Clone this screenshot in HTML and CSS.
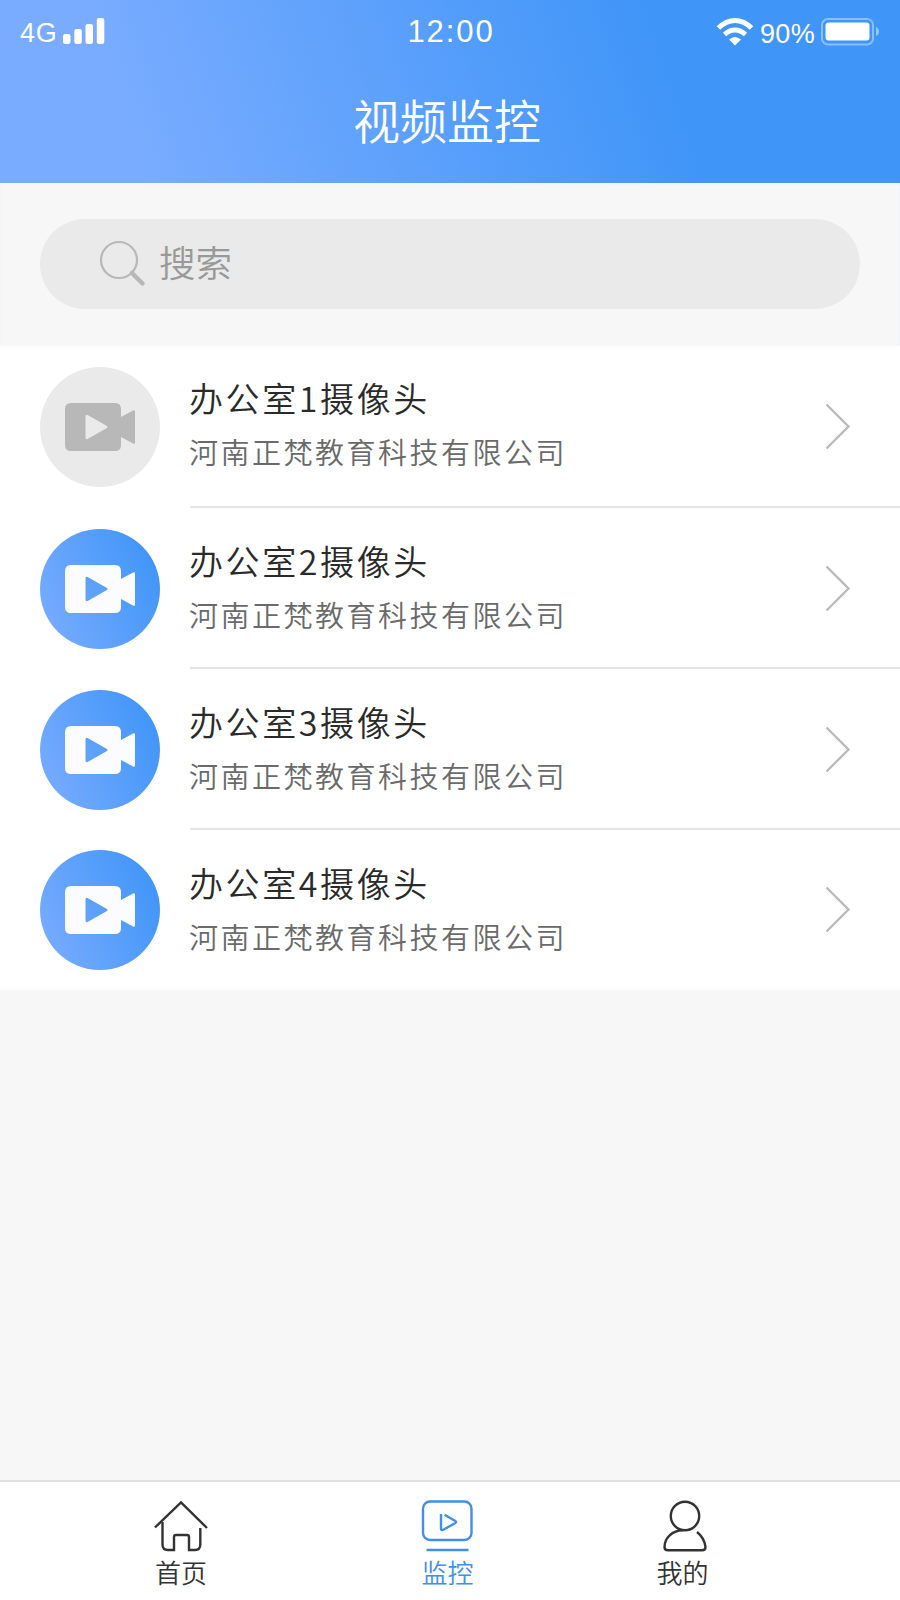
FILE: index.html
```html
<!DOCTYPE html>
<html lang="zh-CN">
<head>
  <meta charset="UTF-8">
  <meta name="viewport" content="width=device-width, initial-scale=1.0">
  <title>视频监控</title>
  <link rel="stylesheet" href="styles.css">
</head>
<body>

  <!-- Shared icons -->
  <svg class="icon-defs" width="0" height="0">
    <symbol id="camera" viewBox="0 0 70 48">
      <path fill-rule="evenodd" d="M6 0H50Q56 0 56 6V14L68 7.500Q70 6.500 70 8.500V39.500Q70 41.500 68 40.500L56 34V42Q56 48 50 48H6Q0 48 0 42V6Q0 0 6 0ZM20.500 13.500V34.500Q20.500 37 22.600 36L41.500 25.200Q43.500 24 41.500 22.800L22.600 12Q20.500 11 20.500 13.500Z"/>
    </symbol>
    <symbol id="arrow" viewBox="0 0 26 48">
      <path d="M1.500 2.500L23.500 24.500L1.500 46.500" fill="none" stroke="#b9b9b9" stroke-width="2.300"/>
    </symbol>
  </svg>

  <div class="app">
    <header class="header">
      <div class="status">
        <div class="status-left">
          <span class="status-text">4G</span>
          <svg width="42" height="26" viewBox="0 0 42 26" fill="#fff">
            <rect x="0" y="16" width="7.500" height="10" rx="2.200"/>
            <rect x="11.300" y="11" width="7.500" height="15" rx="2.200"/>
            <rect x="22.500" y="6" width="7.500" height="20" rx="2.200"/>
            <rect x="33.800" y="0" width="7.500" height="26" rx="2.200"/>
          </svg>
        </div>
        <div class="time">12:00</div>
        <div class="status-right">
          <svg class="wifi" width="38" height="28" viewBox="0 0 38 28">
            <path d="M2.500 10Q10 2.500 19 2.500T35.500 10" fill="none" stroke="#fff" stroke-width="5"/>
            <path d="M8.500 16.500Q13.300 12 19 12T29.500 16.500" fill="none" stroke="#fff" stroke-width="4.800"/>
            <path d="M13 21.500Q19 16.500 25 21.500L19 27.500Z" fill="#fff"/>
          </svg>
          <span class="status-text">90%</span>
          <svg class="battery" width="59" height="28" viewBox="0 0 59 28">
            <rect x="1" y="1" width="51" height="25.500" rx="6" fill="none" stroke="#fff" stroke-opacity=".4" stroke-width="2"/>
            <rect x="4.500" y="4.500" width="44" height="18" rx="3" fill="#fff"/>
            <path d="M55 9Q58 10 58 13.500T55 18Z" fill="#fff" fill-opacity=".45"/>
          </svg>
        </div>
      </div>
      <h1 class="title">视频监控</h1>
    </header>

    <div class="search">
      <div class="search-box">
        <svg width="48" height="48" viewBox="0 0 48 48" fill="none" stroke="#b8b8b8">
          <circle cx="20" cy="20" r="18" stroke-width="2.200"/>
          <path d="M33 33L43.500 43.500" stroke-width="4.500" stroke-linecap="round"/>
        </svg>
        <span>搜索</span>
      </div>
    </div>

    <main class="list">
      <div class="item">
        <div class="avatar offline"><svg width="70" height="48"><use href="#camera"/></svg></div>
        <div class="info">
          <div class="text">
            <div class="name">办公室1摄像头</div>
            <div class="company">河南正梵教育科技有限公司</div>
          </div>
          <svg width="26" height="48"><use href="#arrow"/></svg>
        </div>
      </div>
      <div class="item">
        <div class="avatar"><svg width="70" height="48"><use href="#camera"/></svg></div>
        <div class="info">
          <div class="text">
            <div class="name">办公室2摄像头</div>
            <div class="company">河南正梵教育科技有限公司</div>
          </div>
          <svg width="26" height="48"><use href="#arrow"/></svg>
        </div>
      </div>
      <div class="item">
        <div class="avatar"><svg width="70" height="48"><use href="#camera"/></svg></div>
        <div class="info">
          <div class="text">
            <div class="name">办公室3摄像头</div>
            <div class="company">河南正梵教育科技有限公司</div>
          </div>
          <svg width="26" height="48"><use href="#arrow"/></svg>
        </div>
      </div>
      <div class="item">
        <div class="avatar"><svg width="70" height="48"><use href="#camera"/></svg></div>
        <div class="info">
          <div class="text">
            <div class="name">办公室4摄像头</div>
            <div class="company">河南正梵教育科技有限公司</div>
          </div>
          <svg width="26" height="48"><use href="#arrow"/></svg>
        </div>
      </div>
    </main>

    <nav class="tabbar">
      <div class="tab">
        <svg width="54" height="52" viewBox="0 0 54 52">
          <path d="M1 27.500L27 2.500L53 28"/>
          <path d="M8.500 22V44.500Q8.500 50 14 50H20V37Q20 35 22 35H33Q35 35 35 37V50H41Q46.300 50 46.300 44.500V28"/>
        </svg>
        <span>首页</span>
      </div>
      <div class="tab active">
        <svg width="54" height="52" viewBox="0 0 54 52">
          <rect x="2" y="1.500" width="48.500" height="38.500" rx="7"/>
          <path d="M20 14V28.500Q20 31 22.300 29.700L34 23.200Q36 22 34 20.800L23.500 14.800"/>
          <path d="M5.500 50H47.500"/>
        </svg>
        <span>监控</span>
      </div>
      <div class="tab">
        <svg class="user" width="54" height="52" viewBox="0 0 54 52">
          <circle cx="27" cy="16" r="14.200"/>
          <path d="M25 30.200C14 30.200 6.500 38.500 6.500 47Q6.500 50.300 10 50.300H44Q47.500 50.300 47.500 47Q46.500 38 39 32"/>
        </svg>
        <span>我的</span>
      </div>
    </nav>
  </div>

</body>
</html>
```
FILE: styles.css
```css
:root {
  --blue: #3f95f8;
  --blue-light: #79acff;
  --grey: #b8b8b8;
  --line: #e4e4e4;
}

* {
  box-sizing: border-box;
}

body {
  margin: 0;
  font-family: "Noto Sans CJK SC", sans-serif;
  font-weight: 350;
  background-color: #f7f7f7;
}

svg {
  display: block;
  flex: none;
}

.icon-defs {
  position: absolute; /* keep it out of the page flow */
}

.app {
  width: 900px;
  height: 1600px;
  display: flex;
  flex-direction: column;
}

/* Header */
.header {
  height: 183px;
  color: #fff;
  background: linear-gradient(71deg, var(--blue-light) 15%, var(--blue) 74%);
}

.status {
  height: 64px;
  padding: 0 20px;
  display: grid;
  grid-template-columns: 1fr auto 1fr;
  align-items: center;
  font-family: "Liberation Sans", Arial, sans-serif;
}

.status-left,
.status-right {
  display: flex;
  align-items: center;
}

.status-left {
  gap: 5px;
  padding-bottom: 2px;
}

.status-left .status-text {
  letter-spacing: 0.8px;
}

.status-right {
  justify-content: flex-end;
}

.status-text {
  font-size: 27px;
  line-height: 30px;
  padding-top: 4px;
}

.status-right .status-text {
  margin: 0 6px;
  letter-spacing: 0.3px;
}

.time {
  padding-left: 2px;
  font-size: 31px;
  letter-spacing: 1.9px;
}

.title {
  margin: 0;
  padding-right: 6px;
  font-size: 47px;
  font-weight: 350;
  line-height: 110px;
  text-align: center;
}

/* Search */
.search {
  height: 163px;
  padding: 36px 39px 0;
  border: 1px solid #f2f5fb;
  border-width: 0 1px;
}

.search-box {
  height: 90px;
  padding-left: 59px;
  border-radius: 45px;
  background-color: #eaeaea;
  display: flex;
  align-items: center;
  gap: 12px;
  color: #999;
  font-size: 36.5px;
  line-height: 86px;
}

.search-box span {
  padding-bottom: 4px;
}

/* Camera list */
.list {
  background-color: #fff;
}

.item {
  height: 161px;
  padding-left: 40px;
  display: flex;
  align-items: center;
}

.item:first-child {
  height: 162px;
}

.item:last-child {
  height: 160px;
}

.avatar {
  width: 120px;
  height: 120px;
  margin-right: 30px;
  border-radius: 50%;
  background: linear-gradient(67deg, var(--blue-light) 5%, var(--blue) 92%);
  display: flex;
  justify-content: center;
  align-items: center;
  fill: #fafcff;
}

.avatar.offline {
  background: #eaeaea;
  fill: var(--grey);
}

.info {
  flex: 1;
  height: 100%;
  padding-right: 49px;
  border-bottom: 2px solid var(--line);
  display: flex;
  justify-content: space-between;
  align-items: center;
}

.item:last-child .info {
  border-bottom-color: transparent;
}

.text {
  margin-left: -1px;
  padding-bottom: 2px;
}

.item:first-child .text {
  padding-bottom: 4px;
}

.item:last-child .text {
  padding-bottom: 0;
}

.name {
  color: #2a2a2a;
  font-size: 34px;
  line-height: 54px;
  letter-spacing: 2.600px;
}

.company {
  color: #6a6a6a;
  font-size: 29px;
  line-height: 52px;
  letter-spacing: 2.500px;
}

/* Bottom tabs */
.tabbar {
  height: 120px;
  margin-top: auto;
  padding-top: 18px;
  border-top: 2px solid #dfdfdf;
  background-color: #fff;
  display: grid;
  grid-template-columns: 362px 171px 299px;
}

.tab {
  display: flex;
  flex-direction: column;
  align-items: center;
  color: #333;
  font-size: 26px;
  line-height: 39px;
}

.tab svg {
  fill: none;
  stroke: currentColor;
  stroke-width: 2.400;
}

.tab .user {
  margin-left: 5px;
}

.tab.active {
  color: #4090ea;
}
```
